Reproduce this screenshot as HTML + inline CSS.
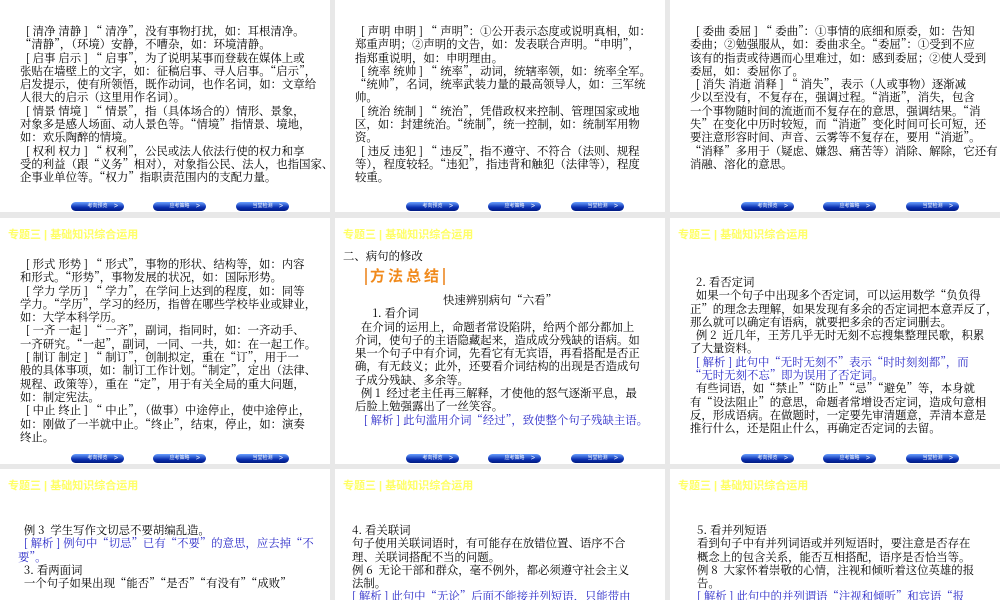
<!DOCTYPE html>
<html><head><meta charset="utf-8"><style>
*{margin:0;padding:0;box-sizing:border-box}
html,body{width:1000px;height:600px;overflow:hidden}
body{background:#e8e8e8;position:relative;font-family:"Noto Serif CJK SC","Liberation Serif",serif}
.s{position:absolute;width:330px;height:246px;background:#fff;overflow:hidden}
.r3{height:131px}
.h{position:absolute;left:8px;top:8px;font:bold 11px "Liberation Sans","Noto Sans CJK SC",sans-serif;color:#ffff66;white-space:nowrap}
.t{position:absolute;font-size:11.4px;line-height:13.3px;color:#000;white-space:nowrap}
.t div{height:13.3px}
.b{color:#2b2bc8}
.btn{position:absolute;top:236px;width:53px;height:9px;border-radius:5px;background:linear-gradient(#6aa0ff,#0a2fb0 60%,#001a80);font:5px sans-serif;color:#fff;text-align:center;line-height:9px}
.btn:after{content:">";position:absolute;right:6px;font-size:7px;top:0}
</style></head><body>

<div class="s" style="left:0;top:-34px">
<div class="t" style="left:20px;top:59px">
<div>&nbsp;&nbsp;[ 清净 清静 ] “ 清净”，没有事物打扰，如：耳根清净。</div>
<div>“清静”，（环境）安静，不嘈杂，如：环境清静。</div>
<div>&nbsp;&nbsp;[ 启事 启示 ] “ 启事”，为了说明某事而登载在媒体上或</div>
<div>张贴在墙壁上的文字，如：征稿启事、寻人启事。“启示”，</div>
<div>启发提示，使有所领悟，既作动词，也作名词，如：文章给</div>
<div>人很大的启示（这里用作名词）。</div>
<div>&nbsp;&nbsp;[ 情景 情境 ] “ 情景”，指（具体场合的）情形、景象，</div>
<div>对象多是感人场面、动人景色等。“情境”指情景、境地，</div>
<div>如：欢乐陶醉的情境。</div>
<div>&nbsp;&nbsp;[ 权利 权力 ] “ 权利”，公民或法人依法行使的权力和享</div>
<div>受的利益（跟“义务”相对），对象指公民、法人，也指国家、</div>
<div>企事业单位等。“权力”指职责范围内的支配力量。</div>
</div>
<div class="btn" style="left:71px">考向预览</div><div class="btn" style="left:153px">应考策略</div><div class="btn" style="left:236px">当堂检测</div>
</div>

<div class="s" style="left:335px;top:-34px">
<div class="t" style="left:20px;top:59px">
<div>&nbsp;&nbsp;[ 声明 申明 ] “ 声明”：①公开表示态度或说明真相，如：</div>
<div>郑重声明；②声明的文告，如：发表联合声明。“申明”，</div>
<div>指郑重说明，如：申明理由。</div>
<div>&nbsp;&nbsp;[ 统率 统帅 ] “ 统率”，动词，统辖率领，如：统率全军。</div>
<div>“统帅”，名词，统率武装力量的最高领导人，如：三军统</div>
<div>帅。</div>
<div>&nbsp;&nbsp;[ 统治 统制 ] “ 统治”，凭借政权来控制、管理国家或地</div>
<div>区，如：封建统治。“统制”，统一控制，如：统制军用物</div>
<div>资。</div>
<div>&nbsp;&nbsp;[ 违反 违犯 ] “ 违反”，指不遵守、不符合（法则、规程</div>
<div>等），程度较轻。“违犯”，指违背和触犯（法律等），程度</div>
<div>较重。</div>
</div>
<div class="btn" style="left:71px">考向预览</div><div class="btn" style="left:153px">应考策略</div><div class="btn" style="left:236px">当堂检测</div>
</div>

<div class="s" style="left:670px;top:-34px">
<div class="t" style="left:20px;top:59px">
<div>&nbsp;&nbsp;[ 委曲 委屈 ] “ 委曲”：①事情的底细和原委，如：告知</div>
<div>委曲；②勉强服从，如：委曲求全。“委屈”：①受到不应</div>
<div>该有的指责或待遇而心里难过，如：感到委屈；②使人受到</div>
<div>委屈，如：委屈你了。</div>
<div>&nbsp;&nbsp;[ 消失 消逝 消释 ] “ 消失”，表示（人或事物）逐渐减</div>
<div>少以至没有，不复存在，强调过程。“消逝”，消失，包含</div>
<div>一个事物随时间的流逝而不复存在的意思，强调结果。“消</div>
<div>失”在变化中历时较短，而“消逝”变化时间可长可短，还</div>
<div>要注意形容时间、声音、云雾等不复存在，要用“消逝”。</div>
<div>“消释”多用于（疑虑、嫌怨、痛苦等）消除、解除，它还有</div>
<div>消融、溶化的意思。</div>
</div>
<div class="btn" style="left:71px">考向预览</div><div class="btn" style="left:153px">应考策略</div><div class="btn" style="left:236px">当堂检测</div>
</div>

<div class="s" style="left:0;top:218px">
<div class="h">专题三 | 基础知识综合运用</div>
<div class="t" style="left:20px;top:40px">
<div>&nbsp;&nbsp;[ 形式 形势 ] “ 形式”，事物的形状、结构等，如：内容</div>
<div>和形式。“形势”，事物发展的状况，如：国际形势。</div>
<div>&nbsp;&nbsp;[ 学力 学历 ] “ 学力”，在学问上达到的程度，如：同等</div>
<div>学力。“学历”，学习的经历，指曾在哪些学校毕业或肄业，</div>
<div>如：大学本科学历。</div>
<div>&nbsp;&nbsp;[ 一齐 一起 ] “ 一齐”，副词，指同时，如：一齐动手、</div>
<div>一齐研究。“一起”，副词，一同、一共，如：在一起工作。</div>
<div>&nbsp;&nbsp;[ 制订 制定 ] “ 制订”，创制拟定，重在“订”，用于一</div>
<div>般的具体事项，如：制订工作计划。“制定”，定出（法律、</div>
<div>规程、政策等），重在“定”，用于有关全局的重大问题，</div>
<div>如：制定宪法。</div>
<div>&nbsp;&nbsp;[ 中止 终止 ] “ 中止”，（做事）中途停止，使中途停止，</div>
<div>如：刚做了一半就中止。“终止”，结束，停止，如：演奏</div>
<div>终止。</div>
</div>
<div class="btn" style="left:71px">考向预览</div><div class="btn" style="left:153px">应考策略</div><div class="btn" style="left:236px">当堂检测</div>
</div>

<div class="s" style="left:335px;top:218px">
<div class="h">专题三 | 基础知识综合运用</div>
<div class="t" style="left:8px;top:32px"><div>二、病句的修改</div></div>
<div style="position:absolute;left:30px;top:50px;font:bold 15px 'Liberation Sans','Noto Sans CJK SC',sans-serif;color:#f08a1c;letter-spacing:3px;border-left:2px solid #f0a050;border-right:2px solid #f0a050;padding:0 1px 0 3px;line-height:17px">方法总结</div>
<div class="t" style="left:20px;top:76px">
<div style="text-align:center;width:290px">快速辨别病句“六看”</div>
<div>&nbsp;&nbsp;&nbsp;&nbsp;&nbsp;&nbsp;1. 看介词</div>
<div>&nbsp;&nbsp;在介词的运用上，命题者常设陷阱，给两个部分都加上</div>
<div>介词，使句子的主语隐藏起来，造成成分残缺的语病。如</div>
<div>果一个句子中有介词，先看它有无宾语，再看搭配是否正</div>
<div>确，有无歧义；此外，还要看介词结构的出现是否造成句</div>
<div>子成分残缺、多余等。</div>
<div>&nbsp;&nbsp;例 1&nbsp; 经过老主任再三解释，才使他的怒气逐渐平息，最</div>
<div>后脸上勉强露出了一丝笑容。</div>
<div class="b">&nbsp;&nbsp;&nbsp;[ 解析 ] 此句滥用介词“经过”，致使整个句子残缺主语。</div>
</div>
<div class="btn" style="left:71px">考向预览</div><div class="btn" style="left:153px">应考策略</div><div class="btn" style="left:236px">当堂检测</div>
</div>

<div class="s" style="left:670px;top:218px">
<div class="h">专题三 | 基础知识综合运用</div>
<div class="t" style="left:20px;top:58px">
<div>&nbsp;&nbsp;2. 看否定词</div>
<div>&nbsp;&nbsp;如果一个句子中出现多个否定词，可以运用数学“负负得</div>
<div>正”的理念去理解，如果发现有多余的否定词把本意弄反了，</div>
<div>那么就可以确定有语病，就要把多余的否定词删去。</div>
<div>&nbsp;&nbsp;例 2&nbsp; 近几年，王芳几乎无时无刻不忘搜集整理民歌，积累</div>
<div>了大量资料。</div>
<div class="b">&nbsp;&nbsp;[ 解析 ] 此句中“无时无刻不”表示“时时刻刻都”，而</div>
<div class="b">“无时无刻不忘”即为误用了否定词。</div>
<div>&nbsp;&nbsp;有些词语，如“禁止”“防止”“忌”“避免”等，本身就</div>
<div>有“设法阻止”的意思，命题者常增设否定词，造成句意相</div>
<div>反，形成语病。在做题时，一定要先审清题意，弄清本意是</div>
<div>推行什么，还是阻止什么，再确定否定词的去留。</div>
</div>
<div class="btn" style="left:71px">考向预览</div><div class="btn" style="left:153px">应考策略</div><div class="btn" style="left:236px">当堂检测</div>
</div>

<div class="s r3" style="left:0;top:469px">
<div class="h">专题三 | 基础知识综合运用</div>
<div class="t" style="left:18px;top:55px">
<div>&nbsp;&nbsp;例 3&nbsp; 学生写作文切忌不要胡编乱造。</div>
<div class="b">&nbsp;&nbsp;[ 解析 ] 例句中“切忌”已有“不要”的意思，应去掉“不</div>
<div class="b">要”。</div>
<div>&nbsp;&nbsp;3. 看两面词</div>
<div>&nbsp;&nbsp;一个句子如果出现“能否”“是否”“有没有”“成败”</div>
</div>
</div>

<div class="s r3" style="left:335px;top:469px">
<div class="h">专题三 | 基础知识综合运用</div>
<div class="t" style="left:17px;top:55px">
<div>4. 看关联词</div>
<div>句子使用关联词语时，有可能存在放错位置、语序不合</div>
<div>理、关联词搭配不当的问题。</div>
<div>例 6&nbsp; 无论干部和群众，毫不例外，都必须遵守社会主义</div>
<div>法制。</div>
<div class="b">[ 解析 ] 此句中“无论”后面不能接并列短语，只能带由</div>
</div>
</div>

<div class="s r3" style="left:670px;top:469px">
<div class="h">专题三 | 基础知识综合运用</div>
<div class="t" style="left:27px;top:55px">
<div>5. 看并列短语</div>
<div>看到句子中有并列词语或并列短语时，要注意是否存在</div>
<div>概念上的包含关系，能否互相搭配，语序是否恰当等。</div>
<div>例 8&nbsp; 大家怀着崇敬的心情，注视和倾听着这位英雄的报</div>
<div>告。</div>
<div class="b">[ 解析 ] 此句中的并列谓语“注视和倾听”和宾语“报</div>
</div>
</div>

</body></html>
